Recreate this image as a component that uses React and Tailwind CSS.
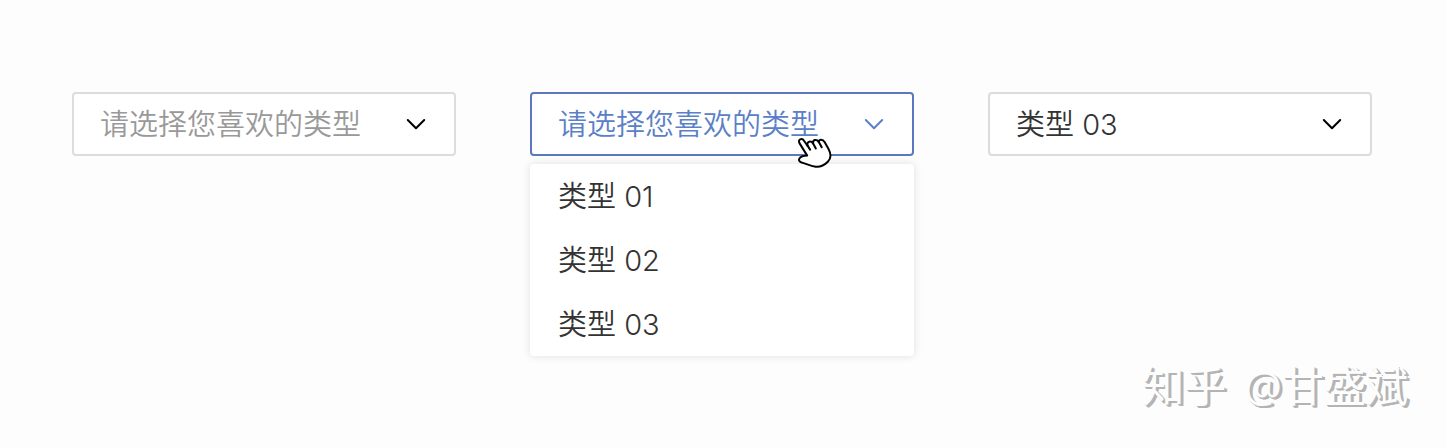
import React, { useState } from 'react';

const OPTIONS = ['类型 01', '类型 02', '类型 03'];
const PLACEHOLDER = '请选择您喜欢的类型';

const Chevron = ({ className }) => (
  <svg
    viewBox="0 0 20 12"
    aria-hidden="true"
    className={`pointer-events-none absolute right-[30px] top-[26px] h-3 w-5 ${className}`}
    fill="none"
    stroke="currentColor"
    strokeWidth="2"
    strokeLinecap="round"
    strokeLinejoin="round"
  >
    <path d="M1.8 2l8.2 8.2L18.2 2" />
  </svg>
);

const HandCursor = () => (
  <svg
    viewBox="0 0 40 36"
    aria-hidden="true"
    className="pointer-events-none absolute right-[79px] top-[42px] z-20 h-9 w-10"
    fill="#ffffff"
    stroke="#000000"
    strokeWidth="2"
    strokeLinecap="round"
    strokeLinejoin="round"
  >
    <path d="M12.2 21.6L4.6 9.4C3.6 7.6 3.8 6 5.2 5.3c1.4-.7 2.9-.1 3.8 1.5l3.6 5.2c-.6-2.4 0-4 1.6-4.3 1.6-.4 2.8.2 3.8 1.6-.2-1.8.4-3 1.9-3.3 1.6-.3 2.8.4 3.8 1.8.2-1.3.9-2 2.1-2.1 1.8-.1 3 .8 3.8 2.4l3.8 6.6c2.8 5 2.6 9.8-.6 13-3.6 3.6-7.4 5.6-12.2 5-5.2-.8-9.6-3-14-4.2-2.4-.8-3.2-2.4-2.2-4 1.4-2 4.2-2.6 7.8-2.9z" />
    <path d="M12.4 11.4l2.7 4.2M18 9.3l2.8 5.2M23.7 7.7l3 5.6" />
  </svg>
);

const TypeSelect = ({ label, initialValue = '', initialOpen = false, children }) => {
  const [value, setValue] = useState(initialValue);
  const [open, setOpen] = useState(initialOpen);

  const tone = open
    ? 'border-[#5b78bd] text-[#5b80c8]'
    : value
      ? 'border-[#dcdcdc] text-[#333333]'
      : 'border-[#dcdcdc] text-[#999999]';

  return (
    <div className="relative">
      <select
        aria-label={label}
        value={value}
        onChange={(e) => setValue(e.target.value)}
        onMouseDown={(e) => {
          e.preventDefault();
          setOpen(!open);
        }}
        className={`block h-16 w-full cursor-pointer appearance-none rounded border-2 bg-white px-[26px] pt-0.5 outline-none ${tone}`}
      >
        <option value="" hidden>
          {PLACEHOLDER}
        </option>
        {OPTIONS.map((option) => (
          <option key={option} value={option}>
            {option}
          </option>
        ))}
      </select>
      <Chevron className={open ? 'text-[#5b80c8]' : 'text-black'} />

      {/* Option panel */}
      {open && (
        <ul className="absolute inset-x-0 top-full z-10 mt-2 rounded bg-white text-[#333333] shadow-[0_0_8px_rgba(0,0,0,0.12)]">
          {OPTIONS.map((option) => (
            <li key={option}>
              <button
                type="button"
                className="block h-16 w-full cursor-pointer rounded px-7 pt-0.5 text-left hover:bg-gray-50"
                onClick={() => {
                  setValue(option);
                  setOpen(false);
                }}
              >
                {option}
              </button>
            </li>
          ))}
        </ul>
      )}
      {children}
    </div>
  );
};

const App = () => {
  return (
    <div className="flex min-h-screen flex-col justify-between bg-[#fdfdfd] pt-[92px] pb-8 font-['Inter','Noto_Sans_CJK_SC',sans-serif] text-[29px] font-[350]">
      <main className="grid grid-cols-3 gap-[74px] pl-[72px] pr-[74px]">
        <TypeSelect label="类型选择一" />
        <TypeSelect label="类型选择二" initialOpen>
          <HandCursor />
        </TypeSelect>
        <TypeSelect label="类型选择三" initialValue="类型 03" />
      </main>
      <footer className="flex justify-end gap-[18px] pr-[38px] font-['Open_Sans','Noto_Sans_CJK_SC',sans-serif] text-[42px] leading-[60px] font-normal text-[#fdfdfd] [text-shadow:1px_1px_0_#b4b4b4,2px_2px_0_#b4b4b4,3px_2px_0_#b4b4b4]">
        <span>知乎</span>
        <span>@甘盛斌</span>
      </footer>
    </div>
  );
};

export default App;
